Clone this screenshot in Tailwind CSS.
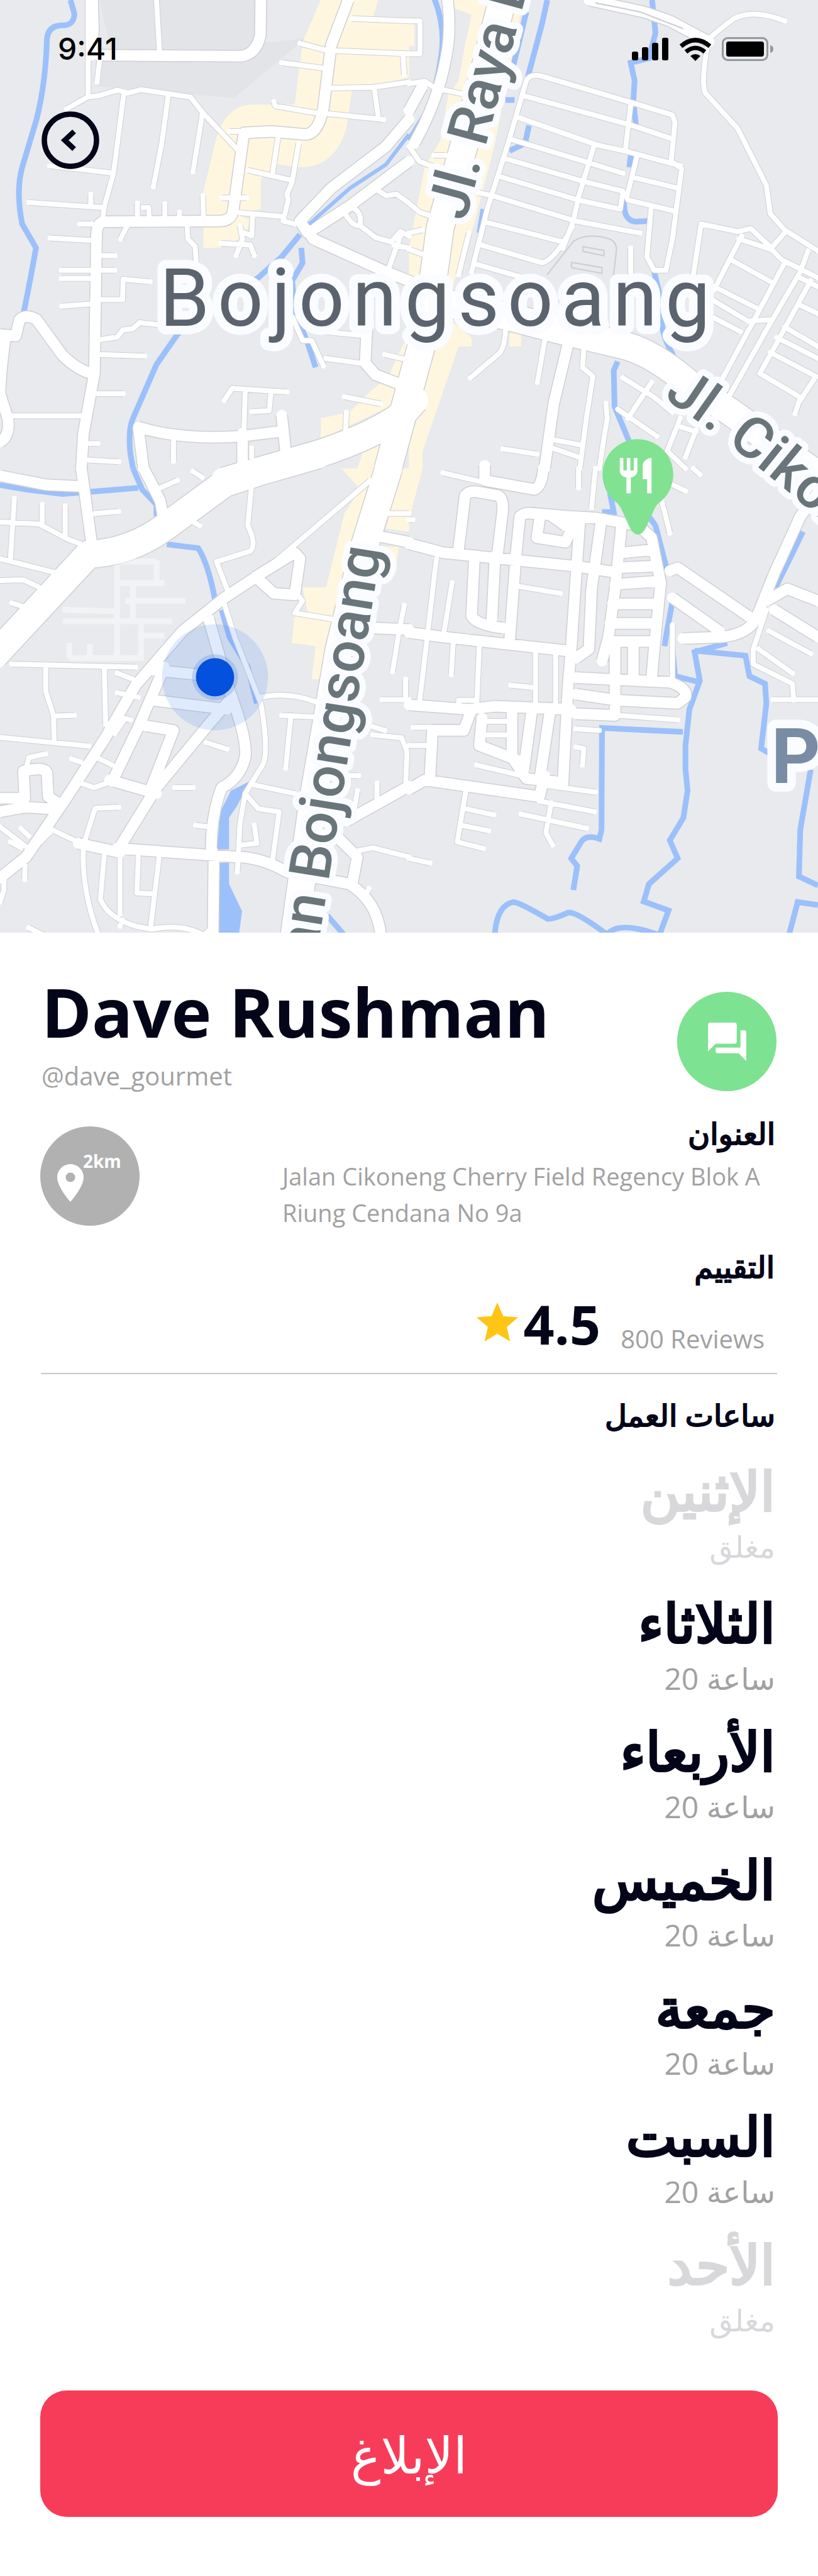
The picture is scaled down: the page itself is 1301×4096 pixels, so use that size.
<!DOCTYPE html>
<html lang="ar">
<head>
<meta charset="utf-8">
<meta name="viewport" content="width=device-width, initial-scale=1">
<title>Dave Rushman</title>
<script src="https://cdn.jsdelivr.net/npm/@tailwindcss/browser@4"></script>
</head>
<body class="bg-white text-[#050519] font-['Open_Sans','DejaVu_Sans',sans-serif]">
<main class="relative flex min-h-screen w-full flex-col">

<section class="relative w-full" aria-label="Map">
<svg class="block w-full bg-[#e8eaed]" viewBox="0 0 1712 1952" role="img" aria-label="Bojongsoang">
  <defs>
    <g id="yellow">
      <g transform="scale(.5459 .625)">
        <path d="M1230 0H1450L1430 60L1568 70V260L1350 300L1330 420Q1290 560 1150 560L1060 550L1000 600V700L900 715L960 735L940 790L840 830H780V640L830 460Q870 350 970 350H1130L1160 140ZM1568 1120L1530 1180L1490 1260L1420 1310L1340 1380L1230 1400V1470L1568 1330ZM1370 1568L1400 1490L1480 1460L1450 1568Z"/>
      </g>
      <g transform="translate(856 0) scale(.5459 .625)">
        <path d="M150 0H440L370 300L330 480L250 750L170 950L140 1060L240 1130V1160H190L60 1490L0 1640V1480L90 1150L0 1160V830L20 740L60 560L100 500L120 470L150 320L190 270L215 150L240 50L150 20ZM0 80H20V155H0ZM385 1115H430V1160H385Z"/>
      </g>
      <g transform="translate(0 980) scale(.5459 .6302)">
        <path d="M1310 0H1440L1370 250L1290 600L1240 700H1195L1210 590L1118 580L1130 490L1180 480L1160 395H1250L1320 150L1380 70ZM1540 0H1568V210L1480 200ZM1470 260H1530L1520 310ZM1568 20L1620 -60V0L1568 170Z"/>
      </g>
    </g>
    <g id="water">
      <g transform="scale(.5459 .625)">
        <path vector-effect="non-scaling-stroke" d="M270 0L285 45Q285 85 240 85Q185 85 180 130Q175 280 140 400L85 560Q60 640 85 750L138 830Q120 920 90 1050M1150 785L1080 860L990 930L780 1040L680 1120L600 1220L510 1400Q490 1440 500 1520L510 1568M1155 830L1160 880L1120 940L1130 1040L1180 1150L1210 1230"/>
      </g>
      <g transform="translate(856 0) scale(.5459 .625)">
        <path vector-effect="non-scaling-stroke" d="M90 -20Q140 80 125 180Q100 330 50 400L0 470M530 0L510 80L455 260M450 40L400 220M370 335H405M460 420L445 480L385 505M932 0L945 110L920 195L850 210L865 270L860 340L870 420M850 520L845 560M825 670Q820 740 870 742L915 740M940 910L965 1000Q960 1090 990 1150L1040 1240M800 1210L785 1240L788 1360L845 1480M285 700L270 780"/>
      </g>
      <g transform="translate(0 980) scale(.5459 .6302)">
        <path vector-effect="non-scaling-stroke" d="M0 55L100 70L240 85L530 65M510 0L545 70L600 120V160M640 252L760 265Q800 320 825 440M850 470L880 560L950 660L985 780M1255 1485L1330 1560"/>
        <path vector-effect="non-scaling-stroke" fill="#9cc0fa" stroke="none" d="M955 1040L885 1070L845 1140L832 1265H878V1160L910 1120ZM842 1310H878V1380L928 1470L915 1555H835Z"/>
      </g>
      <g transform="translate(856 980) scale(.5459 .6302)">
        <path vector-effect="non-scaling-stroke" d="M770 80L785 145H740M920 160L945 190L990 340M1010 440L985 560L980 590M1010 600L1020 690L1115 710M1050 875L740 862L738 1200L730 1230Q680 1215 660 1240L622 1295L645 1320L630 1400M1220 580L1095 610L1115 705L1075 800L1060 920V1000L1068 1070L1052 1160L1000 1235L1030 1295L920 1380L900 1438L995 1468L960 1550Q800 1500 760 1548Q640 1470 610 1475Q545 1500 530 1495Q420 1440 400 1440Q335 1450 328 1555M1095 605L1290 622L1305 690L1365 715L1370 780L1350 930L1380 945M1540 1000L1500 1200L1495 1355L1568 1385M1568 1450L1490 1440L1455 1555M1510 210L1460 300L1385 430"/>
      </g>
    </g>
    <g id="lanes">
      <g transform="scale(.5459 .625)">
        <path vector-effect="non-scaling-stroke" d="M338 0V320M600 0L612 180M385 180L372 275M255 365L335 325L380 320L450 302L490 312L540 300L730 325L780 380L910 500M475 312L435 580L400 690L392 740M645 320L620 480L588 625M775 385L740 575M190 555L420 578M110 678L400 695M348 650V690M527 680V720M550 695H570L572 725M632 682V725M688 710V730M778 655L780 725M305 750H350M192 797L350 805M385 856H440M235 905H440M235 932H350M385 1003H470L472 935L575 943M237 1025L345 1018M485 760L462 800M718 760L720 800L748 825L752 880M385 1137L450 1128L470 1105L510 1100L535 1080L640 1090M385 1187L555 1192M375 1318H472M30 1392H320M345 1485H375M340 1540L455 1546M950 570L1110 602M1065 465L1045 580M1145 480L1120 610L1100 650L1105 670L1085 740L1130 750M920 712L1085 725M850 662H945M848 815L960 820L975 855M920 755L930 800L905 855M968 730L965 790L925 775M1080 210L1240 228M1150 145L1250 168M1050 340L1055 355L1210 378M1250 380L1470 400M1350 62L1568 70M1290 170L1568 180M1545 180L1550 250M1270 295L1430 292L1568 275M1435 295L1450 390M880 440H930M1435 630L1480 655L1520 650L1568 680M1320 710Q1350 760 1380 755L1440 795L1500 810L1535 775L1568 790M1350 695Q1390 710 1380 755M1535 790L1490 900M1510 820L1568 830M1120 1060L1160 1140H1195L1240 1225M1250 1200L1400 1218M1240 1110L1410 1125M1530 1285L1568 1300M1475 1187L1568 1205M1320 1328L1460 1352M1328 1380L1325 1440M860 1340L890 1300L1100 1312M940 1310L935 1450M1038 1320L1032 1375L965 1378M665 1475V1545M965 1500V1530"/>
      </g>
      <g transform="translate(856 0) scale(.5459 .625)">
        <path vector-effect="non-scaling-stroke" d="M0 70H42V180H0M0 280L60 272L100 295L210 315M0 490L40 540L130 570M95 520H140M0 680L40 710L90 725M0 780L50 770M0 835L50 850M1150 130Q1200 90 1250 60Q1330 30 1440 70M1145 150Q1120 270 1135 310L1260 430L1370 620L1385 715L1440 770L1568 840M240 910L300 700L380 480L450 270Q465 245 510 255L860 345L1010 385L1020 410L1005 540L1045 565L1010 800L985 905H940L912 860L928 700M445 322L855 420L1010 465M425 395L720 485L840 508L1040 555M385 465L690 545L820 580M365 530L680 610L820 640L810 700L650 670L345 590M320 655L640 740L885 780M300 745L590 810M275 820L510 880Q560 870 625 760M710 485L650 660L630 740L590 830M850 350L830 500M875 520L835 660L840 670L1010 705M865 595L1030 630M260 885L420 925M850 830V930M230 780L190 920M265 645L320 655M1090 920L1120 750L1260 775L1310 765L1390 830L1440 780M1275 790L1170 970M1265 800L1390 835L1430 870L1568 930M1235 870L1390 945M1440 880L1330 1060L1200 1270M1500 910L1380 1090L1225 1330M1530 840L1500 910M1170 960L1330 1030M1165 1005L1300 1075M1160 1060L1270 1110M1300 1075L1390 1070M1540 940L1390 1180L1345 1250L1500 1330L1480 1385M1500 930L1568 960M1495 1020L1568 1050M1440 1095L1568 1160M1410 1130L1568 1200M1385 1180L1560 1260L1500 1340M370 1100Q370 1150 350 1180L235 1265M520 1140L492 1280M670 1170L665 1230L705 1260L680 1400L655 1568M755 1350L760 1400L745 1480L730 1568M820 1265L940 1330L1010 1380M930 1280L840 1400M800 1370L950 1460M1040 1400L990 1510L1060 1568M1100 1440L1060 1530M360 1503L490 1520M540 1470L660 1490M550 1500L650 1530M1045 1430L1100 1445"/>
      </g>
      <g transform="translate(0 980) scale(.5459 .6302)">
        <path vector-effect="non-scaling-stroke" d="M0 178L150 185L260 235L320 255M55 100L40 300M162 120V190M250 125V230M365 150L455 143M0 300L230 350M0 372L90 370L150 395M45 447L110 465M600 70L680 40M740 10L775 30M745 180L765 190M965 50L950 190Q985 250 960 275L830 310L870 400M45 650L520 660M175 660V740L205 820L208 910M210 822L285 820M400 665L405 850M0 893L340 922M450 680L510 700M450 745L530 760M440 880L480 830L500 835M370 960L430 985M275 965L310 975M100 1000L110 960L175 948M670 1060H740M790 910L870 932M750 1185L800 1190M310 1045L360 1060L410 1045M455 1125L365 1128L320 1250Q310 1400 380 1555M200 1200L260 1225L300 1240M400 1280L385 1430Q410 1490 520 1520L580 1530Q700 1510 780 1550L820 1520M460 1290V1480M530 1290L525 1410L580 1412M610 1290L578 1520M1000 760Q1100 740 1210 775M1080 820L1200 825M1115 825L1095 995M970 1050L1130 1080M940 1080L990 1130L1070 1140L1045 1300M975 1185L985 1245L930 1250M1420 40L1000 350M1140 420L1160 440L1130 480L1270 500M1480 150H1568M1550 455L1530 540L1505 675M1465 768H1568M1555 700V768M1400 850L1475 870M1430 885L1540 895L1560 940L1555 1060M1340 1020H1375M1445 1045V1110M1370 1070L1355 1150M1370 1270L1430 1260L1568 1290M1400 1420L1415 1395M110 1525L180 1555M0 1190L60 1230L120 1270L190 1210M40 1240L80 1260M80 1195L110 1220M95 1320V1365M15 1370V1400L0 1440M860 450L900 560L1000 780Q1030 930 1010 980L940 1080L920 1180L910 1340M460 1520L470 1500"/>
      </g>
      <g transform="translate(856 980) scale(.5459 .6302)">
        <path vector-effect="non-scaling-stroke" d="M105 300L40 780M165 380L135 540M170 570L162 685M270 580L260 780M485 600V780M562 610V790M390 720L470 727M410 390L580 415M190 790V770H250M15 860H80M0 920H70M300 840H400M300 885H400M260 985L430 1020M500 1050L715 1075M500 1105L710 1140M430 1148L680 1195M545 1110L525 1210L550 1250M220 1060L185 1240L285 1262M215 1130L325 1150M200 1185L305 1203M0 1295L80 1310M640 865L730 870M640 925L670 930L665 985M800 820L1030 835M1010 520V700M1395 768H1568M1380 540L1540 615M1340 600L1470 680M1370 470L1320 600V650L1470 715L1475 770M130 15L280 45M650 0V65M715 0L700 130M970 110L1000 215M1060 75L1000 50M1090 0L1115 20M0 170H15"/>
      </g>
    </g>
    <g id="streets">
      <g transform="scale(.5459 .625)">
        <path vector-effect="non-scaling-stroke" d="M355 0L358 100L350 185M1000 0L998 120Q980 185 920 188L380 185M1335 0L1270 150L1240 360Q1220 450 1170 450L1040 440L935 445L895 700Q890 740 840 740L400 742Q370 745 370 790L362 1250L320 1450L312 1568M0 1120L60 1125L75 1070Q100 1050 140 1070L240 1190Q300 1240 350 1250M20 1130Q0 1260 0 1320L30 1400Q40 1460 0 1480M1568 400L1480 490L1270 630L1150 740L1180 780L1340 690L1568 540M1180 770L1200 800L1480 910L1568 940L1640 970M530 1430Q700 1475 930 1460L1070 1445M530 1430L550 1568M930 1450V1568M1080 1390L1095 1510M1410 1040L1400 1215L1440 1255L1530 1285"/>
      </g>
      <g transform="translate(856 0) scale(.5459 .625)">
        <path vector-effect="non-scaling-stroke" d="M145 -20Q165 100 140 200Q110 340 20 480M690 0L900 40L1000 70L1150 140M610 1150L555 1350L520 1568M0 370L50 290"/>
      </g>
      <g transform="translate(0 980) scale(.5459 .6302)">
        <path vector-effect="non-scaling-stroke" d="M312 0L350 240M0 25L180 55L310 60M550 0L575 40L615 110L625 160M800 500L880 740Q950 900 940 960Q920 1030 850 1060Q810 1150 810 1260L820 1290L817 1555M1000 350L860 430L700 540L520 720L400 900L250 1100L100 1290L0 1360M590 670L820 690M590 770L870 800M890 760L800 850L600 1060L450 1270M630 660L530 860L430 1040M560 855L665 870L580 1060M420 1035L600 1080M450 1260L500 1265L900 1290Q1000 1290 1100 1340L1340 1380Q1450 1440 1460 1555M1300 1230L1370 1290L1350 1380M1330 1170L1568 1055M300 1245L460 1275M0 1095H95L90 1005Q170 990 180 1010L185 1090L220 1110M0 1140L100 1125L190 1130M980 360L1130 280L1150 300L1130 420L1050 415L980 360M1450 225L1568 245M1430 530L1568 535"/>
      </g>
      <g transform="translate(856 980) scale(.5459 .6302)">
        <path vector-effect="non-scaling-stroke" d="M0 250L130 280L640 325L790 345M0 545L130 560L600 605M190 270L215 90Q230 75 260 78L340 90Q365 100 358 150L340 280M410 290L385 580M410 290L425 160Q440 145 480 150L620 160L720 165L880 190L930 230L965 380L940 600L930 700M655 170L620 620L610 720L590 1050L550 1040M500 170L490 230L600 245L640 170M550 160L600 190M735 185L700 400L690 600L640 630M815 190L790 400L765 560L740 640M250 310L240 490Q260 520 360 530M330 290L318 500M820 280L940 270M800 330L940 325M790 385L950 375M780 450H950M770 515H940M760 575H940M790 580V820L640 815M860 580V700M640 695L1000 710Q1070 730 1060 760L1030 780L800 770L640 750M0 785L230 800L330 790L620 800M240 800L210 870L90 870L80 1030M0 1065L60 1035L500 1090L520 1020M395 810V960L450 1030L560 1040M470 810L440 1000M540 810L500 1040M280 830L270 920L420 970M1000 340L1030 330L1300 490M1010 430L1190 540M1568 80L1500 160L1400 350L1330 500Q1300 550 1200 560L1050 565M1370 440L1450 400L1568 440M1400 470L1568 560M290 -10V40L480 70Q510 60 515 0"/>
      </g>
    </g>
    <g id="highways">
      <g transform="scale(.5459 .625)">
        <path vector-effect="non-scaling-stroke" d="M1590 1340L1540 1390Q1430 1460 1220 1520L860 1610"/>
      </g>
      <g transform="translate(856 0) scale(.5459 .625)">
        <path vector-effect="non-scaling-stroke" d="M370 -40L240 400L120 760L90 950L50 1150L-80 1568M60 1000L380 1060L600 1110L840 1160Q950 1190 1080 1290L1250 1390L1568 1590"/>
      </g>
      <g transform="translate(0 980) scale(.5459 .6302)">
        <path vector-effect="non-scaling-stroke" d="M1220 -45L1000 10L860 50L640 190Q500 280 340 285L-20 620M1490 0L1400 250L1300 600L1200 1100L1120 1600"/>
      </g>
    </g>
    <path id="cikoneng" d="M1388 833Q1556 940 1800 1160"/>
  </defs>

  <path fill="#e2e4e7" d="M208 0H560L540 95Q530 110 500 108L232 105ZM200 130L640 80L490 205L200 180Z"/>
  <use href="#yellow" fill="#fef6df"/>
  <use href="#water" fill="none" stroke="#9cc0fa" class="[stroke-width:9px]"/>
  <g fill="none" stroke="#cfd0d3" stroke-linejoin="round">
    <use href="#lanes" class="[stroke-width:10px]"/>
    <use href="#streets" class="[stroke-width:20px]"/>
    <use href="#highways" class="[stroke-width:46px]"/>
  </g>
  <g fill="none" stroke="#fff" stroke-linejoin="round" stroke-linecap="round">
    <use href="#lanes" class="[stroke-width:8px]"/>
    <use href="#streets" class="[stroke-width:17px]"/>
    <use href="#highways" class="[stroke-width:43px]"/>
  </g>
  <path fill="none" stroke="#9cc0fa" stroke-width="8" d="M647 469L732 394L808 344L856 281"/>
  <path fill="none" stroke="#cfd0d3" stroke-width="3" d="M1145 575L1200 505Q1225 488 1265 497Q1292 502 1290 525L1284 575M1220 516L1264 524V535L1220 526ZM1196 549L1260 560V572L1196 560ZM1246 6L1340 25L1430 60"/>
  <path fill="none" stroke="#fff" stroke-opacity=".45" stroke-width="12" d="M245 1182V1377M328 1172V1222M245 1220H344M262 1257H388M131 1276L246 1279M131 1300H360M145 1377H295M145 1345V1377M188 1348V1377M295 1301V1383M278 1226V1295M245 1175H328M289 1330H344"/>

  <g class="font-[Roboto,sans-serif]" stroke="#fafcff" stroke-linejoin="round" paint-order="stroke">
    <text class="text-[168px] tracking-widest" x="334" y="681" fill="#5b636e" stroke-width="36">Bojongsoang</text>
    <text class="text-[160px] font-bold" x="1614" y="1638" fill="#7a8ca5" stroke-width="36">P</text>
    <g class="text-[120px] font-medium" fill="#69757a" stroke-width="26">
      <text transform="translate(974 464) rotate(-75)">Jl. Raya B</text>
      <text transform="translate(662 2005) rotate(-81)">an Bojongsoang</text>
      <text><textPath href="#cikoneng">Jl. Cikon</textPath></text>
    </g>
  </g>

  <circle cx="450" cy="1417" r="111" fill="#3f80f5" fill-opacity=".17"/>
  <circle cx="450" cy="1417" r="48" fill="#5d8de0" fill-opacity=".3"/>
  <circle cx="450" cy="1417" r="40" fill="#0451dd"/>

  <g fill="#81e291">
    <circle cx="1335" cy="993" r="74"/>
    <path d="M1290 1050Q1295 1056 1299 1062L1319 1106Q1335 1131 1351 1106L1371 1062Q1375 1056 1380 1050Z"/>
    <path fill="#fff" transform="translate(1286 951) scale(3.7)" d="M11 9H9V2H7v7H5V2H3v7c0 2.12 1.66 3.84 3.75 3.97V22h2.5v-9.03C11.34 12.84 13 11.12 13 9V2h-2v7zm5-3v8h2.5v8H21V2c-2.76 0-5 2.24-5 4z"/>
  </g>
</svg>

<header class="absolute inset-x-0 top-0 flex flex-col gap-20 pt-12 pr-[70px] pl-[66px]">
  <div class="flex items-center justify-between pl-[26px] text-black">
    <time class="font-[Inter,sans-serif] text-[48px] leading-[60px] font-medium">9:41</time>
    <div class="flex items-center gap-4">
      <svg class="h-9 w-[60px]" viewBox="0 0 60 36" fill="currentColor" aria-label="Signal"><rect x="1" y="22" width="10" height="14" rx="3"/><rect x="17" y="15" width="10" height="21" rx="3"/><rect x="33" y="8" width="10" height="28" rx="3"/><rect x="49" width="10" height="36" rx="3"/></svg>
      <svg class="h-[37px] w-[52px]" viewBox="0 0 52 37" fill="none" stroke="currentColor" stroke-width="7" aria-label="Wi-Fi"><path d="M3 13.500Q26 -6 49 13.500M11 22.500Q26 10 41 22.500"/><path fill="currentColor" stroke="none" d="M18 29Q26 23 34 29L26 37Z"/></svg>
      <svg class="h-[38px] w-[83px]" viewBox="0 0 83 38" aria-label="Battery"><rect x="1.500" y="1.500" width="71" height="35" rx="8" fill="none" stroke="#97989b" stroke-width="3"/><rect x="7" y="7" width="60" height="24" rx="4"/><path fill="#97989b" d="M77 13Q82 14 82 19T77 25Z"/></svg>
    </div>
  </div>
  <button type="button" aria-label="Back" class="-mt-[11px] size-[92px] text-[#050519]">
    <svg class="size-full" viewBox="0 0 92 92" fill="none" stroke="currentColor" stroke-width="8.500"><circle cx="46" cy="46" r="41.500"/><path d="M52 32L37 46L52 60"/></svg>
  </button>
</header>
</section>

<section class="flex items-start justify-between px-[66px] pt-[58px]">
  <div class="flex flex-col">
    <h1 class="text-[108px] leading-[136px] font-bold">Dave Rushman</h1>
    <p class="pt-1 text-[40px] leading-[60px] text-[#a1a1a1]">@dave_gourmet</p>
  </div>
  <button type="button" aria-label="Chat" class="mt-9 flex size-[158px] items-center justify-center rounded-full bg-[#7de291] text-white">
    <svg class="size-[73px]" viewBox="0 0 24 24" fill="currentColor"><path d="M21 6h-2v9H6v2c0 .55.45 1 1 1h11l4 4V7c0-.55-.45-1-1-1zm-4 6V3c0-.55-.45-1-1-1H3c-.55 0-1 .45-1 1v14l4-4h10c.55 0 1-.45 1-1z"/></svg>
  </button>
</section>

<section class="flex items-start justify-between px-16 pt-[22px]">
  <div class="mt-7 flex size-[158px] shrink-0 rounded-full bg-[#b1b1b1] pl-3 text-white">
    <svg class="mt-[54px] size-[72px]" viewBox="0 0 24 24" fill="currentColor" aria-hidden="true"><path d="M12 2C8.130 2 5 5.130 5 9c0 5.250 7 13 7 13s7-7.750 7-13c0-3.870-3.130-7-7-7zm0 9.500c-1.380 0-2.500-1.120-2.500-2.500s1.120-2.500 2.500-2.500 2.500 1.120 2.500 2.500-1.120 2.500-2.500 2.500z"/></svg>
    <span class="-ml-4 pt-9 text-[28px] leading-[38px] font-bold">2km</span>
  </div>
  <div class="flex w-[788px] flex-col">
    <h2 dir="rtl" class="pr-1 text-[48px] leading-[78px] [-webkit-text-stroke:2px]">العنوان</h2>
    <p class="text-[38px] leading-[58px] text-[#a1a1a1]">Jalan Cikoneng Cherry Field Regency Blok A Riung Cendana No 9a</p>
  </div>
</section>

<section class="mx-[65px] flex flex-col border-b-2 border-[#c8c8c8] pt-[18px]">
  <h2 dir="rtl" class="pr-1 text-[48px] leading-[78px] [-webkit-text-stroke:2px]">التقييم</h2>
  <div class="flex items-end justify-end pr-5">
    <svg class="mb-[50px] h-[62px] w-[66px]" viewBox="2 2 20 19" preserveAspectRatio="none" fill="#ffc515" aria-hidden="true"><path d="M12 17.270L18.180 21l-1.640-7.030L22 9.240l-7.190-.610L12 2 9.190 8.630 2 9.240l5.460 4.730L5.820 21z"/></svg>
    <strong class="pb-[26px] pl-2 text-[86px] leading-[104px] font-bold">4.5</strong>
    <span class="pb-6 pl-8 text-[40px] leading-[60px] text-[#a1a1a1]">800 Reviews</span>
  </div>
</section>

<section dir="rtl" class="flex flex-col px-[68px] pt-6">
  <h2 class="text-[48px] leading-[82px] [-webkit-text-stroke:2px]">ساعات العمل</h2>
  <dl class="flex flex-col pt-[18px]">
    <div class="h-[210px] opacity-15"><dt class="text-[86px] leading-[120px] [-webkit-text-stroke:4px]">الإثنين</dt><dd class="text-[48px] leading-[60px]">مغلق</dd></div>
    <div class="h-[204px]"><dt class="text-[86px] leading-[120px] [-webkit-text-stroke:4px]">الثلاثاء</dt><dd class="text-[48px] leading-[60px] text-[#a1a1a1]">ساعة 20</dd></div>
    <div class="h-[204px]"><dt class="text-[86px] leading-[120px] [-webkit-text-stroke:4px]">الأربعاء</dt><dd class="text-[48px] leading-[60px] text-[#a1a1a1]">ساعة 20</dd></div>
    <div class="h-[204px]"><dt class="text-[86px] leading-[120px] [-webkit-text-stroke:4px]">الخميس</dt><dd class="text-[48px] leading-[60px] text-[#a1a1a1]">ساعة 20</dd></div>
    <div class="h-[204px]"><dt class="text-[86px] leading-[120px] [-webkit-text-stroke:4px]">جمعة</dt><dd class="text-[48px] leading-[60px] text-[#a1a1a1]">ساعة 20</dd></div>
    <div class="h-[204px]"><dt class="text-[86px] leading-[120px] [-webkit-text-stroke:4px]">السبت</dt><dd class="text-[48px] leading-[60px] text-[#a1a1a1]">ساعة 20</dd></div>
    <div class="opacity-15"><dt class="text-[86px] leading-[120px] [-webkit-text-stroke:4px]">الأحد</dt><dd class="text-[48px] leading-[60px]">مغلق</dd></div>
  </dl>
</section>

<footer class="mt-auto px-16 pb-[94px]">
  <button type="button" dir="rtl" class="flex h-[201px] w-full items-center justify-center rounded-[42px] bg-[#f73c5a] text-[80px] text-white">الإبلاغ</button>
</footer>
</main>
</body>
</html>
